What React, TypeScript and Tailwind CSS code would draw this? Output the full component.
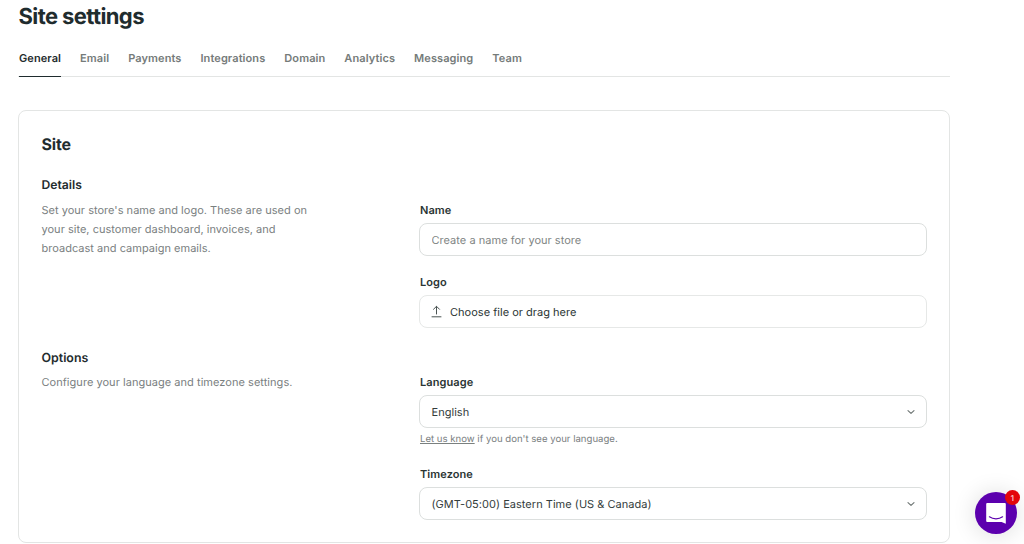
import { useState } from "react";

const tabs = ["General", "Email", "Payments", "Integrations", "Domain", "Analytics", "Messaging", "Team"];

function Chevron() {
  return (
    <svg width="8" height="8" viewBox="0 0 8 8" fill="none" stroke="#6b7371" strokeWidth="1.1" strokeLinecap="round" strokeLinejoin="round">
      <path d="M1 2.6 4 5.4 7 2.6" />
    </svg>
  );
}

function Label({ text }: { text: string }) {
  return <label className="block h-5 pl-px text-[11px] leading-[21px] font-semibold tracking-[0.08px] text-[#2a3433]">{text}</label>;
}

function SelectBox({ value }: { value: string }) {
  return (
    <button className="mt-[3px] flex h-[33px] w-full items-center justify-between rounded-lg border border-[#dcdfde] pr-[11px] pl-[11.5px] text-[11px] tracking-[0.03px] text-[#333c3b]">
      <span className="pt-px">{value}</span>
      <Chevron />
    </button>
  );
}

export default function App() {
  const [active, setActive] = useState("General");
  const [name, setName] = useState("");

  return (
    <div className="relative h-[544px] overflow-hidden bg-white pl-[18px] font-['Inter',sans-serif] text-[#1f2c2e] [text-rendering:geometricPrecision] [&_button]:[text-rendering:inherit] [&_input]:[text-rendering:inherit]">
      <div className="w-[932px]">
        <h1 className="h-[33px] pl-[0.5px] text-[22px] leading-[34px] font-bold tracking-[-0.6px]">Site settings</h1>

        <nav className="flex h-11 gap-[19px] border-b border-[#e3e5e4] pl-px">
          {tabs.map((tab) => (
            <button
              key={tab}
              onClick={() => setActive(tab)}
              className={
                tab === active
                  ? "-mb-px h-11 border-b border-[#1f2c2e] pt-[7px] text-[11px] font-semibold tracking-[0.09px] text-[#1f2c2e]"
                  : "-mb-px h-11 border-b border-transparent pt-[7px] text-[11px] font-semibold tracking-[0.09px] text-[#757b7a]"
              }
            >
              {tab}
            </button>
          ))}
        </nav>

        <section className="mt-[33px] h-[433px] rounded-lg border border-[#e3e5e4] px-[22px] pt-[21px]">
          <h2 className="h-6 pl-[0.5px] text-[16px] leading-6 font-bold tracking-[-0.15px]">Site</h2>

          <div className="mt-[19px] flex h-[173px] justify-between">
            <div className="w-[280px] pl-[0.5px]">
              <h3 className="h-5 text-[12.2px] leading-5 font-semibold">Details</h3>
              <p className="mt-[6px] text-[11px] leading-[19.2px] tracking-[0.02px] text-[#7a807f]">
                Set your store's name and logo. These are used on
                <br />
                your site, customer dashboard, invoices, and
                <br />
                broadcast and campaign emails.
              </p>
            </div>
            <div className="w-[508px] pt-[25px]">
              <Label text="Name" />
              <input
                value={name}
                onChange={(e) => setName(e.target.value)}
                placeholder="Create a name for your store"
                className="mt-[3px] block h-[33px] w-full rounded-lg border border-[#dcdfde] px-[11.5px] text-[11px] tracking-[0.03px] placeholder-[#7f8584] outline-none"
              />
              <div className="mt-4">
                <Label text="Logo" />
                <button className="mt-[3px] flex h-[33px] w-full items-center gap-[8px] rounded-lg border border-[#e6e8e7] px-[11px] text-[11px] tracking-[0.02px] text-[#2a3433]">
                  <svg width="11" height="13" viewBox="0 0 11 13" fill="none" stroke="#4b5453" strokeLinecap="round" strokeLinejoin="round">
                    <path d="M5.5 9V1.5M2.5 4.3l3-3 3 3M1 11.8h9" />
                  </svg>
                  <span className="pt-px">Choose file or drag here</span>
                </button>
              </div>
            </div>
          </div>

          <div className="flex justify-between">
            <div className="w-[280px] pl-[0.5px]">
              <h3 className="h-5 text-[12.4px] leading-5 font-semibold">Options</h3>
              <p className="mt-[5px] text-[11px] leading-[19.2px] tracking-[0.04px] text-[#7a807f]">
                Configure your language and timezone settings.
              </p>
            </div>
            <div className="w-[508px] pt-[24px]">
              <Label text="Language" />
              <SelectBox value="English" />
              <p className="mt-[3px] h-4 pl-px text-[9.6px] leading-[17px] text-[#7a807f]">
                <a href="#" className="underline">Let us know</a> if you don't see your language.
              </p>
              <div className="mt-[17px]">
                <Label text="Timezone" />
                <SelectBox value="(GMT-05:00) Eastern Time (US & Canada)" />
              </div>
            </div>
          </div>
        </section>
      </div>

      {/* chat launcher */}
      <div className="absolute top-[492px] left-[975px] flex size-[42px] items-center justify-center rounded-full bg-[#5c00ae] shadow-[0_1px_24px_rgba(0,0,0,0.14)]">
        <svg width="22" height="24" viewBox="0 0 22 24">
          <path d="M2.2 2h17.6a1 1 0 0 1 1 1v19.8l-4.2-1.8H2.2a1 1 0 0 1-1-1V3a1 1 0 0 1 1-1Z" fill="#fff" />
          <path d="M4.4 15.8c3.8 2.7 9.4 2.7 13.2 0" fill="none" stroke="#5c00ae" strokeWidth="1.2" strokeLinecap="round" />
        </svg>
        <span className="absolute -top-[2px] left-[30px] flex size-[15px] items-center justify-center rounded-full bg-[#e3060b] text-[8px] text-white">1</span>
      </div>
    </div>
  );
}
